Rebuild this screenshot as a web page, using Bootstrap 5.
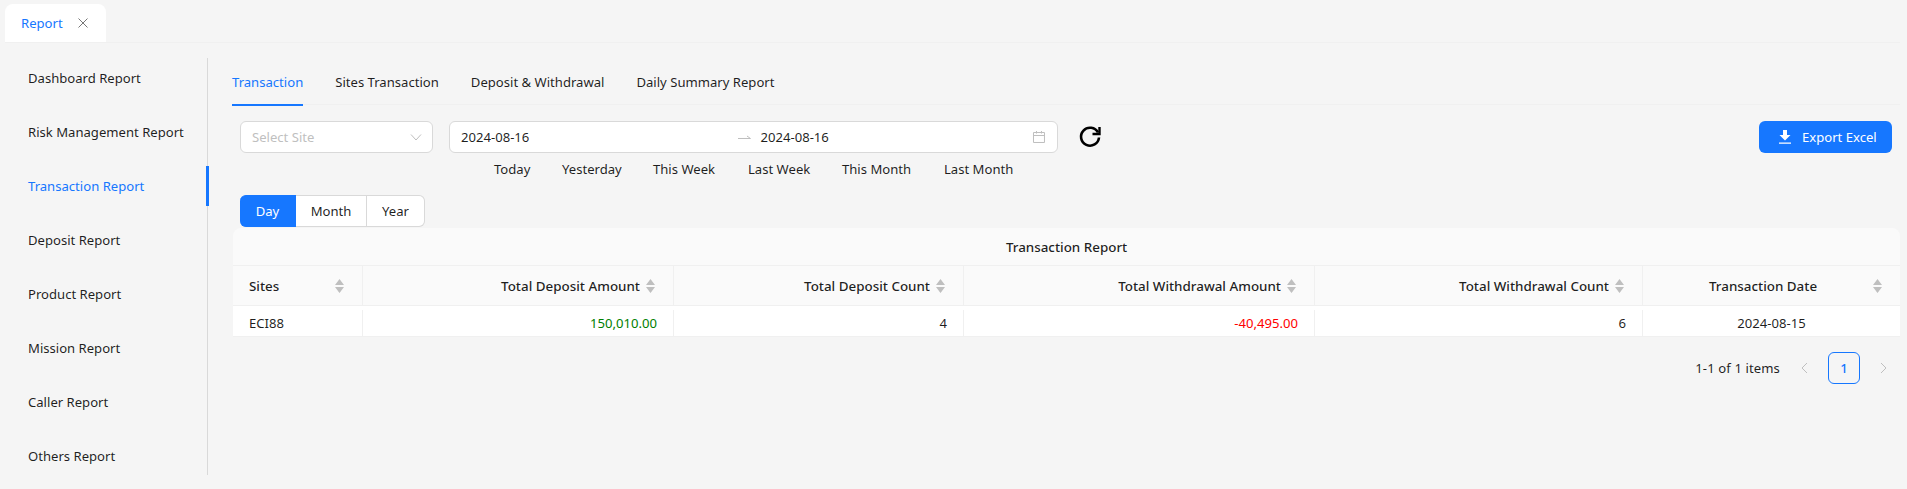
<!DOCTYPE html>
<html lang="en">
<head>
<meta charset="utf-8">
<title>Report</title>
<link href="https://cdn.jsdelivr.net/npm/bootstrap@5.3.0/dist/css/bootstrap.min.css" rel="stylesheet">
<style>
html,body{height:100%}
body{background:#f5f5f5;color:rgba(0,0,0,.88);font-family:"Noto Sans","Liberation Sans",sans-serif;font-size:13.1px;line-height:22px;overflow:hidden}
.tabstrip{margin:0 7px 0 5px;padding-top:4px;height:43px;border-bottom:1px solid #f0f0f0}
.doc-tab{width:101px;height:38px;background:#fff;border-radius:8px 8px 0 0;color:#1677ff;padding-left:16px;gap:14px}
.doc-tab svg{color:#777}
.page-body{margin-top:15px}
.side-menu{width:208px;height:417px;border-right:1px solid #d9d9d9;gap:14px;flex:none}
.side-link{height:40px;line-height:40px;padding-left:28px;color:rgba(0,0,0,.88);text-decoration:none;position:relative;width:208px;flex:none}
.side-link.on{color:#1677ff}
.side-link.on::after{content:"";position:absolute;right:-1px;top:0;bottom:0;width:3px;background:#1677ff}
.main-pane{margin-left:24px;width:1668px;flex:none}
.sub-tabs{height:46px;margin-top:1px;border-bottom:1px solid #f0f0f0;gap:32px}
.sub-tab{padding:12px 0 0;height:46px;color:rgba(0,0,0,.88);text-decoration:none;position:relative}
.sub-tab.on{color:#1677ff}
.sub-tab.on::after{content:"";position:absolute;left:0;right:0;bottom:-1px;height:2px;background:#1677ff}
.filter-zone{padding:16px 8px 0}
.ctl-box{height:32px;background:#fff;border:1px solid #d9d9d9;border-radius:6px}
.site-pick{width:193px;padding:0 10px 0 11px;color:#bfbfbf}
.range-pick{width:609px;margin-left:16px;padding:0 11px}
.range-pick .dt{width:277px}
.range-pick .dt2{width:272px;margin-left:10px}
.refresh-btn{margin-left:20px}
.export-btn{width:133px;height:32px;background:#1677ff;color:#fff;border:0;border-radius:6px;padding:0 0 0 20px;gap:11px;font-size:13.1px;line-height:22px}
.export-btn:hover{background:#1677ff;color:#fff}
.presets{position:relative;margin-left:254px;margin-top:5px;height:22px}
.presets span{position:absolute}
.seg-group{margin-top:15px;height:32px;display:flex}
.seg-btn{height:32px;background:#fff;border:1px solid #d9d9d9;border-left:0;text-align:center;line-height:30px;color:rgba(0,0,0,.88)}
.seg-btn.on{background:#1677ff;color:#fff;border-color:#1677ff;border-radius:6px 0 0 6px;width:56px}
.seg-btn.m{width:71px}
.seg-btn.y{width:58px;border-radius:0 6px 6px 0}
.table.rep-table{table-layout:fixed;width:1667px;margin:1px 0 0 1px;border-collapse:separate;border-spacing:0;--bs-table-bg:transparent}
.table.rep-table thead th{background:#fafafa;font-weight:500;font-size:13.4px;border-bottom:1px solid #f0f0f0;color:rgba(0,0,0,.88);vertical-align:middle;box-shadow:none}
.table.rep-table thead th.cap{height:38px;padding:0;text-align:center;border-radius:8px 8px 0 0}
.table.rep-table thead th.hd{height:40px;padding:0 18px 0 16px;border-right:1px solid #f0f0f0}
.table.rep-table thead th.hd:last-child{border-right:0}
.table.rep-table .gap-row td{height:4px;padding:0;border:0;background:#fff;line-height:0;font-size:0;box-shadow:none}
.table.rep-table .val td{height:27px;background:#fff;padding:0 16px;border-right:1px solid #f0f0f0;border-bottom:1px solid #f0f0f0;line-height:22px;color:rgba(0,0,0,.88);box-shadow:none;vertical-align:middle}
.table.rep-table .val td:last-child{border-right:0}
.table.rep-table .val td.pos{color:green}
.table.rep-table .val td.neg{color:red}
.sort-mark{width:9px;flex:none;margin-left:6px;display:block}
.pager{height:32px;margin-top:15px;padding-right:12px}
.pg-count{margin-right:20px;letter-spacing:.1px}
.pg-num{width:32px;height:32px;border:1px solid #1677ff;border-radius:6px;color:#1677ff;text-align:center;line-height:30px;margin:0 20px;font-weight:500}
</style>
</head>
<body>
<div class="tabstrip d-flex">
  <div class="doc-tab d-flex align-items-center">Report
    <svg width="12" height="12" viewBox="0 0 12 12" fill="none" stroke="currentColor" stroke-width="1"><path d="M1.5 1.5l9 9M10.5 1.5l-9 9"/></svg>
  </div>
</div>
<div class="page-body d-flex">
  <nav class="side-menu d-flex flex-column">
    <a class="side-link" href="#">Dashboard Report</a>
    <a class="side-link" href="#">Risk Management Report</a>
    <a class="side-link on" href="#">Transaction Report</a>
    <a class="side-link" href="#">Deposit Report</a>
    <a class="side-link" href="#">Product Report</a>
    <a class="side-link" href="#">Mission Report</a>
    <a class="side-link" href="#">Caller Report</a>
    <a class="side-link" href="#">Others Report</a>
  </nav>
  <main class="main-pane">
    <div class="sub-tabs d-flex">
      <a class="sub-tab on" href="#">Transaction</a>
      <a class="sub-tab" href="#">Sites Transaction</a>
      <a class="sub-tab" href="#">Deposit &amp; Withdrawal</a>
      <a class="sub-tab" href="#">Daily Summary Report</a>
    </div>
    <div class="filter-zone">
      <div class="d-flex align-items-center">
        <div class="ctl-box site-pick d-flex align-items-center justify-content-between">Select Site
          <svg width="12" height="12" viewBox="0 0 12 12" fill="none" stroke="#bfbfbf" stroke-width="1"><path d="M1 3.5l5 5.5 5-5.5"/></svg>
        </div>
        <div class="ctl-box range-pick d-flex align-items-center">
          <span class="dt">2024-08-16</span>
          <svg width="13" height="8" viewBox="0 0 13 8" fill="none" stroke="#bfbfbf" stroke-width="1"><path d="M0 5.5h12.5L9 3"/></svg>
          <span class="dt dt2 flex-grow-1">2024-08-16</span>
          <svg width="14" height="14" viewBox="0 0 14 14" fill="none" stroke="#bfbfbf" stroke-width="1"><path d="M1.5 2.5h11v10h-11zM1.5 5.5h11M4.5 1v2.5M9.5 1v2.5"/></svg>
        </div>
        <div class="refresh-btn d-flex">
          <svg width="24" height="24" viewBox="0 0 24 24" fill="none" stroke="#000" stroke-width="2.6"><path d="M20 7.5A9 9 0 1 0 21 12.5"/><path d="M21.5 2v7h-7" stroke-width="2.4"/></svg>
        </div>
        <button class="btn export-btn ms-auto d-flex align-items-center" type="button">
          <svg width="12" height="14" viewBox="0 0 12 14" fill="#fff"><path d="M4 0h4v5h3.5L6 10.5.5 5H4zM0 12.5h12v1.2H0z"/></svg>
          Export Excel
        </button>
      </div>
      <div class="presets">
        <span style="left:0">Today</span><span style="left:68px">Yesterday</span><span style="left:159px">This Week</span><span style="left:254px">Last Week</span><span style="left:348px">This Month</span><span style="left:450px">Last Month</span>
      </div>
      <div class="seg-group">
        <div class="seg-btn on">Day</div><div class="seg-btn m">Month</div><div class="seg-btn y">Year</div>
      </div>
    </div>
    <table class="table rep-table">
      <colgroup><col style="width:130px"><col style="width:311px"><col style="width:290px"><col style="width:351px"><col style="width:328px"><col style="width:257px"></colgroup>
      <thead>
        <tr><th class="cap" colspan="6">Transaction Report</th></tr>
        <tr>
          <th class="hd"><div class="d-flex align-items-center"><span class="flex-grow-1">Sites</span><svg class="sort-mark" viewBox="0 0 9 14" height="14" fill="#bfbfbf"><path d="M4.5 0L9 6H0zM0 8h9l-4.5 6z"/></svg></div></th>
          <th class="hd"><div class="d-flex align-items-center"><span class="flex-grow-1 text-end">Total Deposit Amount</span><svg class="sort-mark" viewBox="0 0 9 14" height="14" fill="#bfbfbf"><path d="M4.5 0L9 6H0zM0 8h9l-4.5 6z"/></svg></div></th>
          <th class="hd"><div class="d-flex align-items-center"><span class="flex-grow-1 text-end">Total Deposit Count</span><svg class="sort-mark" viewBox="0 0 9 14" height="14" fill="#bfbfbf"><path d="M4.5 0L9 6H0zM0 8h9l-4.5 6z"/></svg></div></th>
          <th class="hd"><div class="d-flex align-items-center"><span class="flex-grow-1 text-end">Total Withdrawal Amount</span><svg class="sort-mark" viewBox="0 0 9 14" height="14" fill="#bfbfbf"><path d="M4.5 0L9 6H0zM0 8h9l-4.5 6z"/></svg></div></th>
          <th class="hd"><div class="d-flex align-items-center"><span class="flex-grow-1 text-end">Total Withdrawal Count</span><svg class="sort-mark" viewBox="0 0 9 14" height="14" fill="#bfbfbf"><path d="M4.5 0L9 6H0zM0 8h9l-4.5 6z"/></svg></div></th>
          <th class="hd"><div class="d-flex align-items-center"><span class="flex-grow-1 text-center">Transaction Date</span><svg class="sort-mark" viewBox="0 0 9 14" height="14" fill="#bfbfbf"><path d="M4.5 0L9 6H0zM0 8h9l-4.5 6z"/></svg></div></th>
        </tr>
      </thead>
      <tbody>
        <tr class="gap-row"><td colspan="6"></td></tr>
        <tr class="val"><td>ECI88</td><td class="text-end pos">150,010.00</td><td class="text-end">4</td><td class="text-end neg">-40,495.00</td><td class="text-end">6</td><td class="text-center">2024-08-15</td></tr>
      </tbody>
    </table>
    <div class="pager d-flex align-items-center justify-content-end">
      <span class="pg-count">1-1 of 1 items</span>
      <svg width="8" height="12" viewBox="0 0 8 12" fill="none" stroke="#bfbfbf" stroke-width="1"><path d="M7 1L2 6l5 5"/></svg>
      <div class="pg-num">1</div>
      <svg width="8" height="12" viewBox="0 0 8 12" fill="none" stroke="#bfbfbf" stroke-width="1"><path d="M1 1l5 5-5 5"/></svg>
    </div>
  </main>
</div>
<script src="https://cdn.jsdelivr.net/npm/bootstrap@5.3.0/dist/js/bootstrap.bundle.min.js"></script>
</body>
</html>
